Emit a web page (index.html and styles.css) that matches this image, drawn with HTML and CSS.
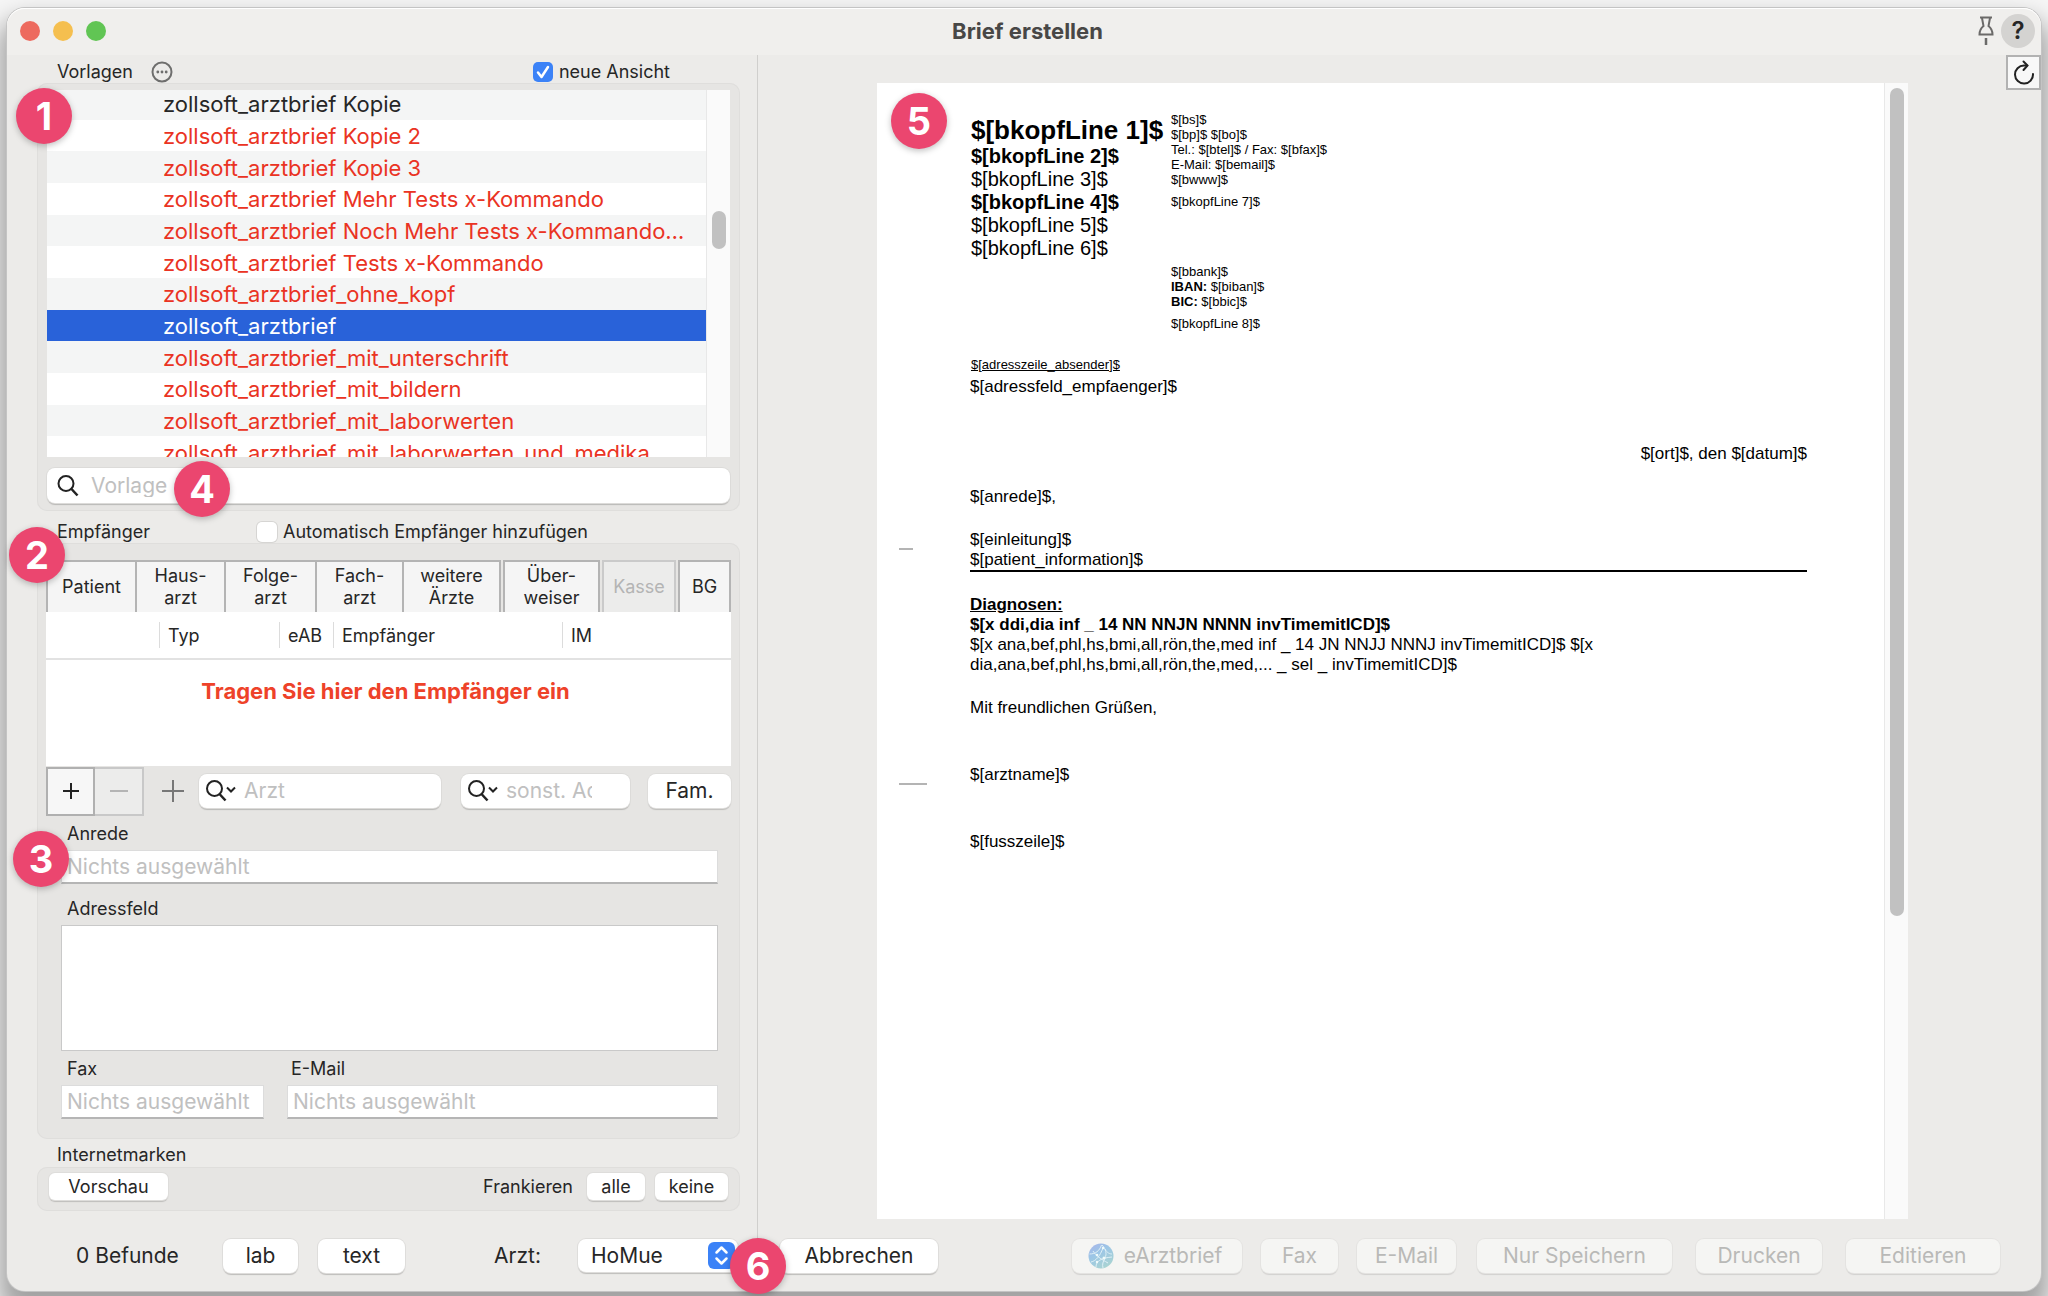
FILE: index.html
```html
<!DOCTYPE html>
<html lang="de">
<head>
<meta charset="utf-8">
<meta name="viewport" content="width=device-width, initial-scale=1">
<title>Brief erstellen</title>
<link rel="stylesheet" href="styles.css">
</head>
<body>
<div class="window">
  <header class="titlebar">
    <div class="lights">
      <button class="light light-close" type="button" aria-label="Schließen"></button>
      <button class="light light-min" type="button" aria-label="Minimieren"></button>
      <button class="light light-max" type="button" aria-label="Maximieren"></button>
    </div>
    <h1 class="title">Brief erstellen</h1>
    <div class="title-tools">
      <button class="pin" type="button" aria-label="Anheften">
        <svg width="16" height="30" viewBox="0 0 16 30" fill="none" stroke="#6b6a69" stroke-width="2"><path d="M2 1.500h12M4 2l1.500 8C3 12 1.500 14.500 1.500 18.500h13c0-4-1.500-6.500-4-8.500L12 2"/><path d="M8 22v7" stroke-width="2.500"/></svg>
      </button>
      <button class="help" type="button" aria-label="Hilfe">?</button>
    </div>
  </header>

  <main class="layout">
    <section class="sidebar">
      <div class="heading heading-first">
        <h2 class="caption">Vorlagen</h2>
        <button class="more" type="button" aria-label="Mehr">
          <svg width="22" height="22" viewBox="0 0 22 22"><circle cx="11" cy="11" r="9.500" fill="none" stroke="#6e6e6d" stroke-width="2"/><g fill="#6e6e6d"><circle cx="6.800" cy="11" r="1.400"/><circle cx="11" cy="11" r="1.400"/><circle cx="15.200" cy="11" r="1.400"/></g></svg>
        </button>
        <label class="check check-view"><input type="checkbox" checked>neue Ansicht</label>
      </div>
      <div class="panel panel-templates">
        <span class="badge badge-1">1</span>
        <div class="list">
          <ul class="rows">
            <li class="row row-dark">zollsoft_arztbrief Kopie</li>
            <li class="row">zollsoft_arztbrief Kopie 2</li>
            <li class="row">zollsoft_arztbrief Kopie 3</li>
            <li class="row">zollsoft_arztbrief Mehr Tests x-Kommando</li>
            <li class="row">zollsoft_arztbrief Noch Mehr Tests x-Kommando…</li>
            <li class="row">zollsoft_arztbrief Tests x-Kommando</li>
            <li class="row">zollsoft_arztbrief_ohne_kopf</li>
            <li class="row row-selected">zollsoft_arztbrief</li>
            <li class="row">zollsoft_arztbrief_mit_unterschrift</li>
            <li class="row">zollsoft_arztbrief_mit_bildern</li>
            <li class="row">zollsoft_arztbrief_mit_laborwerten</li>
            <li class="row">zollsoft_arztbrief_mit_laborwerten_und_medika</li>
          </ul>
          <div class="track"><div class="thumb thumb-list"></div></div>
        </div>
        <label class="search search-template">
          <svg width="22" height="24" viewBox="0 0 22 24" fill="none" stroke="#222" stroke-width="2"><circle cx="9" cy="9.500" r="7.500"/><path d="M14.500 15l6 6.500" stroke-width="2.500"/></svg>
          <input type="search" placeholder="Vorlage" aria-label="Vorlage">
          <span class="badge badge-4">4</span>
        </label>
      </div>

      <div class="heading heading-second">
        <h2 class="caption">Empfänger</h2>
        <label class="check check-auto"><input type="checkbox">Automatisch Empfänger hinzufügen</label>
      </div>
      <div class="panel panel-recipient">
        <span class="badge badge-2">2</span>
        <div class="tabs">
          <button class="tab" type="button">Patient</button>
          <button class="tab" type="button">Haus-<br>arzt</button>
          <button class="tab" type="button">Folge-<br>arzt</button>
          <button class="tab" type="button">Fach-<br>arzt</button>
          <button class="tab tab-end" type="button">weitere<br>Ärzte</button>
          <button class="tab tab-end" type="button">Über-<br>weiser</button>
          <button class="tab tab-end" type="button" disabled>Kasse</button>
          <button class="tab tab-end" type="button">BG</button>
        </div>
        <div class="recipients">
          <table class="table">
            <colgroup><col class="col-blank"><col class="col-type"><col class="col-eab"><col class="col-name"><col></colgroup>
            <thead><tr><th></th><th>Typ</th><th>eAB</th><th>Empfänger</th><th>IM</th></tr></thead>
            <tbody><tr><td colspan="5">Tragen Sie hier den Empfänger ein</td></tr></tbody>
          </table>
        </div>
        <div class="controls">
          <div class="stepper">
            <button class="step" type="button" aria-label="Hinzufügen"><svg width="18" height="18" viewBox="0 0 18 18" stroke="#222" stroke-width="2"><path d="M9 1v16M1 9h16"/></svg></button>
            <button class="step" type="button" aria-label="Entfernen" disabled><svg width="18" height="18" viewBox="0 0 18 18" stroke="#b4b4b4" stroke-width="2"><path d="M0 9h18"/></svg></button>
          </div>
          <button class="plain" type="button" aria-label="Neu"><svg width="22" height="22" viewBox="0 0 22 22" stroke="#777" stroke-width="2"><path d="M11 0v22M0 11h22"/></svg></button>
          <label class="search search-menu search-doctor">
            <svg width="30" height="24" viewBox="0 0 30 24" fill="none" stroke="#222" stroke-width="2"><circle cx="8.500" cy="9.500" r="7.500"/><path d="M13.500 15l6 6.500" stroke-width="2.500"/><path d="M21 8.500l4 4 4-4"/></svg>
            <input type="search" placeholder="Arzt" aria-label="Arzt">
          </label>
          <label class="search search-menu search-other">
            <svg width="30" height="24" viewBox="0 0 30 24" fill="none" stroke="#222" stroke-width="2"><circle cx="8.500" cy="9.500" r="7.500"/><path d="M13.500 15l6 6.500" stroke-width="2.500"/><path d="M21 8.500l4 4 4-4"/></svg>
            <input type="search" placeholder="sonst. Adr." aria-label="sonstige Adresse">
          </label>
          <button class="btn btn-fam" type="button">Fam.</button>
        </div>
        <div class="form">
          <div class="field">
            <label for="anrede">Anrede</label>
            <input id="anrede" class="text" type="text" placeholder="Nichts ausgewählt">
            <span class="badge badge-3">3</span>
          </div>
          <div class="field">
            <label for="adresse">Adressfeld</label>
            <textarea id="adresse" class="area"></textarea>
          </div>
          <div class="pair">
            <div class="field">
              <label for="fax">Fax</label>
              <input id="fax" class="text" type="text" placeholder="Nichts ausgewählt">
            </div>
            <div class="field">
              <label for="mail">E-Mail</label>
              <input id="mail" class="text" type="text" placeholder="Nichts ausgewählt">
            </div>
          </div>
        </div>
      </div>

      <div class="heading heading-third"><h2 class="caption">Internetmarken</h2></div>
      <div class="panel panel-stamps">
        <button class="btn btn-small btn-preview" type="button">Vorschau</button>
        <span class="stamp-label">Frankieren</span>
        <button class="btn btn-small btn-all" type="button">alle</button>
        <button class="btn btn-small btn-none" type="button">keine</button>
      </div>
    </section>

    <section class="preview">
      <div class="viewer">
        <article class="sheet">
          <span class="badge badge-5">5</span>
          <span class="fold fold-top"></span>
          <span class="fold fold-middle"></span>
          <div class="letterhead">
            <div class="practice">
              <p class="practice-name">$[bkopfLine 1]$</p>
              <p><b>$[bkopfLine 2]$</b></p>
              <p>$[bkopfLine 3]$</p>
              <p><b>$[bkopfLine 4]$</b></p>
              <p>$[bkopfLine 5]$</p>
              <p>$[bkopfLine 6]$</p>
            </div>
            <div class="contact">
              <p>$[bs]$<br>$[bp]$ $[bo]$<br>Tel.: $[btel]$ / Fax: $[bfax]$<br>E-Mail: $[bemail]$<br>$[bwww]$</p>
              <p>$[bkopfLine 7]$</p>
              <p class="bank">$[bbank]$<br><b>IBAN:</b> $[biban]$<br><b>BIC:</b> $[bbic]$</p>
              <p>$[bkopfLine 8]$</p>
            </div>
          </div>
          <p class="sender">$[adresszeile_absender]$</p>
          <p class="recipient">$[adressfeld_empfaenger]$</p>
          <p class="date">$[ort]$, den $[datum]$</p>
          <p class="para">$[anrede]$,</p>
          <p class="para intro">$[einleitung]$<br>$[patient_information]$</p>
          <p class="para"><b><u>Diagnosen:</u><br>$[x ddi,dia inf _ 14 NN NNJN NNNN invTimemitICD]$</b><br>$[x ana,bef,phl,hs,bmi,all,rön,the,med inf _ 14 JN NNJJ NNNJ invTimemitICD]$ $[x<br>dia,ana,bef,phl,hs,bmi,all,rön,the,med,... _ sel _ invTimemitICD]$</p>
          <p class="para">Mit freundlichen Grüßen,</p>
          <p class="para-wide">$[arztname]$</p>
          <p class="para-wide">$[fusszeile]$</p>
        </article>
        <div class="track"><div class="thumb thumb-page"></div></div>
      </div>
      <button class="reload" type="button" aria-label="Neu laden">
        <svg width="22" height="26" viewBox="0 0 22 26" fill="none" stroke="#222" stroke-width="2" stroke-linecap="round"><path d="M20 14A9 9 0 1 1 11 5.500h3"/><path d="M10.500 1.500l4 4-4 4.500"/></svg>
      </button>
    </section>

    <footer class="foot-left">
      <span class="reports">0 Befunde</span>
      <button class="btn btn-lab" type="button">lab</button>
      <button class="btn btn-text" type="button">text</button>
      <label class="doctor-label" for="arzt">Arzt:</label>
      <div class="select-wrap">
        <select id="arzt" class="select"><option>HoMue</option></select>
        <svg class="select-arrows" width="27" height="27" viewBox="0 0 27 27" fill="none"><rect width="27" height="27" rx="6" fill="#3b82f7"/><path d="M8.500 10.500l5-5 5 5M8.500 16.500l5 5 5-5" stroke="#fff" stroke-width="2.500" stroke-linecap="round" stroke-linejoin="round"/></svg>
      </div>
    </footer>

    <footer class="foot-right">
      <span class="badge badge-6">6</span>
      <button class="btn btn-cancel" type="button">Abbrechen</button>
      <div class="send">
        <button class="btn btn-letter" type="button" disabled>
          <svg width="26" height="26" viewBox="0 0 26 26"><defs><linearGradient id="globe" x1="0" y1="0" x2=".6" y2="1"><stop offset="0" stop-color="#a9b4ea"/><stop offset=".45" stop-color="#9cc6e6"/><stop offset="1" stop-color="#a9d3d3"/></linearGradient></defs><circle cx="13" cy="13" r="12.500" fill="url(#globe)"/><path d="M1.500 11c6 0 10-3 12-9M14 2c4 4 5 9 3 13s-3 6-2 10M3 19c5-1 9-6 12-14M8 24c0-6 5-9 16-10M5 8c3 5 8 8 15 12M17 6c2 4 5 5 7 5" fill="none" stroke="#dff0f6" stroke-width="1"/><g fill="#f0fafa"><circle cx="16" cy="15" r="1.500"/><circle cx="9" cy="12" r="1.300"/><circle cx="15" cy="5" r="1.200"/><circle cx="9" cy="19" r="1.200"/></g></svg>
          eArztbrief
        </button>
        <button class="btn btn-fax" type="button" disabled>Fax</button>
        <button class="btn btn-mail" type="button" disabled>E-Mail</button>
      </div>
      <div class="store">
        <button class="btn btn-save" type="button" disabled>Nur Speichern</button>
        <button class="btn btn-print" type="button" disabled>Drucken</button>
        <button class="btn btn-edit" type="button" disabled>Editieren</button>
      </div>
    </footer>
  </main>
</div>
</body>
</html>
```
FILE: styles.css
```css
* { box-sizing: border-box; }

body {
  margin: 0;
  padding: 8px 7px 5px;
  overflow: hidden;
  background: #f6f6f6;
  color: #262626;
  font: 18px/22px Inter, "Liberation Sans", sans-serif;
}

h1, h2, p, ul { margin: 0; padding: 0; }

button, input, select, textarea {
  margin: 0;
  border: 0;
  color: inherit;
  font: inherit;
}

button { padding: 0; background: none; }

.window {
  display: flex;
  flex-direction: column;
  min-height: calc(100vh - 13px);
  border-radius: 18px;
  background: #ecebe9;
  box-shadow: 0 0 0 1px #c4c4c4, 0 18px 24px 8px rgba(0, 0, 0, .34);
}

/* Title bar */
.titlebar {
  display: grid;
  grid-template-columns: 1fr auto 1fr;
  align-items: center;
  height: 47px;
  padding: 0 6px 2px 13px;
  border-radius: 18px 18px 0 0;
  background: #f0efed;
  box-shadow: inset 0 1px #fff;
}

.lights { display: flex; gap: 13px; }
.light { width: 20px; height: 20px; border-radius: 50%; }
.light-close { background: #ed6a5e; }
.light-min { background: #f5bf4f; }
.light-max { background: #61c554; }
.title { color: #484746; font-size: 22px; font-weight: 700; }
.title-tools { display: flex; align-items: center; justify-content: flex-end; gap: 7px; }
.pin { display: flex; }
.help {
  width: 34px;
  height: 34px;
  border-radius: 50%;
  background: #d4d3d1;
  font-size: 24px;
  font-weight: 600;
}

/* Two columns with a footer row */
.layout {
  display: grid;
  flex: 1;
  grid-template-columns: 751px minmax(0, 1fr);
  grid-template-rows: 1fr auto;
}

.sidebar { padding: 0 17px 0 30px; border-right: 1px solid #d0cfcd; }

.heading { display: flex; align-items: center; padding-left: 20px; }
.heading-first { padding-top: 6px; }
.heading-second { padding-top: 10px; }
.heading-third { padding: 5px 0 1px 20px; }
.caption { font-size: 18px; font-weight: 400; }
.more { display: flex; margin-left: 18px; }

.check { display: flex; align-items: center; gap: 6px; }
.check-view { margin-left: auto; margin-right: 70px; }
.check-auto { margin-left: auto; margin-right: 152px; }
.check input {
  appearance: none;
  width: 20px;
  height: 20px;
  border-radius: 5px;
  background: #fff;
  box-shadow: 0 0 0 1px #d6d5d3;
}
.check input:checked {
  background: #3b82f7 url("data:image/svg+xml,%3Csvg xmlns='http://www.w3.org/2000/svg' viewBox='0 0 20 20' fill='none' stroke='white' stroke-width='2.500' stroke-linecap='round' stroke-linejoin='round'%3E%3Cpath d='M5 10.500l3.500 4.500L15 5'/%3E%3C/svg%3E");
  box-shadow: none;
}

.panel {
  position: relative;
  border-radius: 10px;
  background: #e6e5e3;
  box-shadow: inset 0 0 0 1px #dfdedc;
}
.panel-templates { padding: 7px 10px 8px; }
.panel-recipient { padding: 17px 9px 20px; }
.panel-stamps { display: flex; align-items: flex-start; height: 44px; padding: 6px 12px; }

/* Template list */
.list {
  display: flex;
  height: 367px;
  margin-bottom: 11px;
  overflow: hidden;
  background: #fff;
}
.rows {
  display: grid;
  flex: 1;
  grid-template-rows: repeat(12, 1fr);
  height: 380px;
  margin-top: -2px;
  font-size: 22px;
  list-style: none;
}
.row {
  display: flex;
  align-items: center;
  padding: 1px 0 0 116px;
  color: #ea3323;
  white-space: nowrap;
}
.row:nth-child(odd) { background: #f4f5f5; }
.row-dark { color: #262626; }
.row.row-selected { background: #2962d9; color: #fff; }

.track {
  flex: none;
  width: 24px;
  padding: 0 4px 0 5px;
  border-left: 1px solid #e8e8e8;
  background: #fafafa;
}
.thumb { border-radius: 7px; background: #c1c1c1; }
.thumb-list { height: 38px; margin-top: 121px; }
.thumb-page { height: 828px; margin-top: 5px; }

/* Search fields */
.search {
  position: relative;
  display: flex;
  align-items: center;
  gap: 12px;
  min-width: 0;
  height: 34px;
  padding: 0 10px;
  border-radius: 8px;
  background: #fff;
  box-shadow: 0 0 0 1px #dcdbd9, 0 2px 1px #b9b8b6;
}
.search-template { height: 35px; }
.search svg { flex: none; }
.search input {
  flex: 1;
  min-width: 0;
  padding: 0;
  outline: 0;
  background: none;
  font-size: 21px;
}
.search input::-webkit-search-cancel-button { display: none; }
::placeholder { color: #c0c0c0; opacity: 1; }
.search-menu { gap: 8px; padding: 0 7px; }
.search-doctor { flex: 1; margin-left: 15px; }
.search-other { flex: none; width: 169px; margin-left: 20px; padding-right: 38px; }

/* Recipient tabs and table */
.tabs {
  display: grid;
  grid-template-columns: 89px 89px 91px 87px 101px 99px 76px 53px;
  height: 52px;
}
.tab {
  border: solid #b4b4b4;
  border-width: 2px 0 0 2px;
  background: #f5f5f5;
}
.tab-end { margin-right: 2px; border-right-width: 2px; }
.tab:last-child { margin-right: 0; }
.tab:disabled { border-color: #cacaca; background: #ececeb; color: #b4b4b4; }

.recipients { height: 154px; background: #fff; }
.table { width: 100%; border-collapse: collapse; table-layout: fixed; }
.col-blank { width: 113px; }
.col-type { width: 120px; }
.col-eab { width: 54px; }
.col-name { width: 229px; }
.table th {
  height: 47px;
  padding: 2px 0 0 9px;
  border-bottom: 2px solid #e2e2e2;
  background: linear-gradient(#dcdcdc, #dcdcdc) left center / 1px 26px no-repeat;
  font-weight: 400;
  text-align: left;
}
.table th:first-child { background: none; }
.table td {
  height: 62px;
  padding: 0 6px 0 0;
  color: #ee4229;
  font-size: 22px;
  font-weight: 700;
  text-align: center;
}

.controls { display: flex; align-items: center; height: 50px; }
.stepper { display: flex; }
.step {
  display: flex;
  align-items: center;
  justify-content: center;
  width: 49px;
  height: 49px;
  border: 2px solid #b0b0b0;
  background: #f7f7f7;
}
.step:disabled { border-color: #c8c8c8; border-left: 0; background: #ececeb; }
.plain { display: flex; margin-left: 18px; }

/* Buttons */
.btn {
  display: flex;
  flex: none;
  align-items: center;
  justify-content: center;
  height: 34px;
  border-radius: 8px;
  background: #fff;
  box-shadow: 0 0 0 1px #dedddb, 0 2px 1px #bebdbb;
  font-size: 21px;
}
.btn:disabled { background: #f5f5f3; color: #b9b9b7; box-shadow: 0 0 0 1px #e4e3e1, 0 2px 1px #d2d1cf; }
.btn-small { height: 27px; border-radius: 6px; font-size: 18px; }
.btn-fam { width: 83px; margin-left: 18px; }
.btn-preview { width: 119px; }
.stamp-label { margin: 3px 0 0 auto; }
.btn-all { width: 58px; margin-left: 14px; }
.btn-none { width: 73px; margin-left: 10px; }

/* Address form */
.form { display: grid; gap: 7px; padding: 7px 13px 0 15px; }
.field { position: relative; display: grid; gap: 5px; }
.field:first-child { margin-bottom: 7px; }
.pair .field { margin: 0; }
.field label { padding-left: 6px; }
.pair { display: grid; grid-template-columns: 203px 1fr; gap: 23px; }
.pair .field:last-child label { padding-left: 4px; }
.text {
  width: 100%;
  height: 34px;
  padding: 0 5px;
  border: solid #dcdcdc;
  border-width: 1px 1px 2px;
  border-bottom-color: #b5b5b5;
  background: #fff;
  font-size: 21px;
}
.area { height: 126px; border: 1px solid #c9c9c9; background: #fff; resize: none; }

/* Letter preview */
.preview {
  display: grid;
  grid-template-columns: minmax(0, 1fr) 133px;
  padding: 0 0 20px 119px;
}
.viewer { display: flex; margin-top: 28px; background: #fff; }
.reload {
  display: flex;
  align-items: center;
  justify-content: center;
  justify-self: end;
  width: 35px;
  height: 35px;
  border: 2px solid #b2b2b2;
  background: #f8f8f8;
}

.sheet {
  position: relative;
  flex: 1;
  padding: 29px 77px 0 93px;
  color: #000;
  font: 17px/20px "Liberation Sans", Arial, sans-serif;
}
.letterhead { display: grid; grid-template-columns: 200px 1fr; padding-left: 1px; }
.practice { padding-top: 3px; font-size: 20px; line-height: 23px; white-space: nowrap; }
.practice-name { font-size: 26px; font-weight: 700; line-height: 30px; }
.contact { display: grid; gap: 7px; font-size: 13px; line-height: 15px; }
.bank { margin-top: 48px; }
.sender {
  margin: 26px 0 5px;
  padding-left: 1px;
  font-size: 13px;
  line-height: 15px;
  text-decoration: underline;
}
.date { margin-top: 47px; text-align: right; }
.para { margin-top: 23px; }
.para-wide { margin-top: 47px; }
.intro { border-bottom: 2px solid #000; }
.fold { position: absolute; left: 22px; height: 2px; background: #b4b4b4; }
.fold-top { top: 465px; width: 14px; }
.fold-middle { top: 700px; width: 28px; }

/* Footer */
.foot-left, .foot-right { display: flex; align-items: flex-start; height: 52px; font-size: 21px; }
.foot-left { line-height: 34px; }
.reports { width: 147px; margin-left: 69px; }
.btn-lab { width: 75px; }
.btn-text { width: 87px; margin-left: 20px; }
.doctor-label { margin-left: auto; }
.select-wrap { position: relative; width: 160px; margin: 0 20px 0 37px; }
.select {
  display: block;
  appearance: none;
  width: 100%;
  height: 33px;
  padding: 0 13px;
  border-radius: 8px;
  background: #fff;
  box-shadow: 0 0 0 1px #dedddb, 0 2px 1px #bebdbb;
}
.select-arrows { position: absolute; top: 3px; right: 3px; pointer-events: none; }

.foot-right { position: relative; padding: 0 41px 0 22px; }
.btn-cancel { width: 158px; margin-right: auto; }
.send { display: flex; gap: 19px; margin-right: 21px; }
.store { display: flex; gap: 24px; }
.btn-letter { gap: 10px; width: 170px; padding-right: 4px; }
.btn-fax { width: 77px; }
.btn-mail { width: 99px; }
.btn-save { width: 195px; }
.btn-print { width: 126px; }
.btn-edit { width: 154px; }

/* Numbered callouts */
.badge {
  position: absolute;
  z-index: 2;
  width: 56px;
  height: 56px;
  border-radius: 50%;
  background: #eb466f;
  box-shadow: 0 2px 6px rgba(0, 0, 0, .25);
  color: #fff;
  font: 700 38px/56px Inter, "Liberation Sans", sans-serif;
  text-align: center;
}
.badge-1 { top: 5px; left: -21px; }
.badge-2 { top: -16px; left: -28px; }
.badge-3 { top: 8px; left: -48px; }
.badge-4 { top: -7px; left: 127px; }
.badge-5 { top: 10px; left: 14px; }
.badge-6 { top: -1px; left: -28px; }
```
